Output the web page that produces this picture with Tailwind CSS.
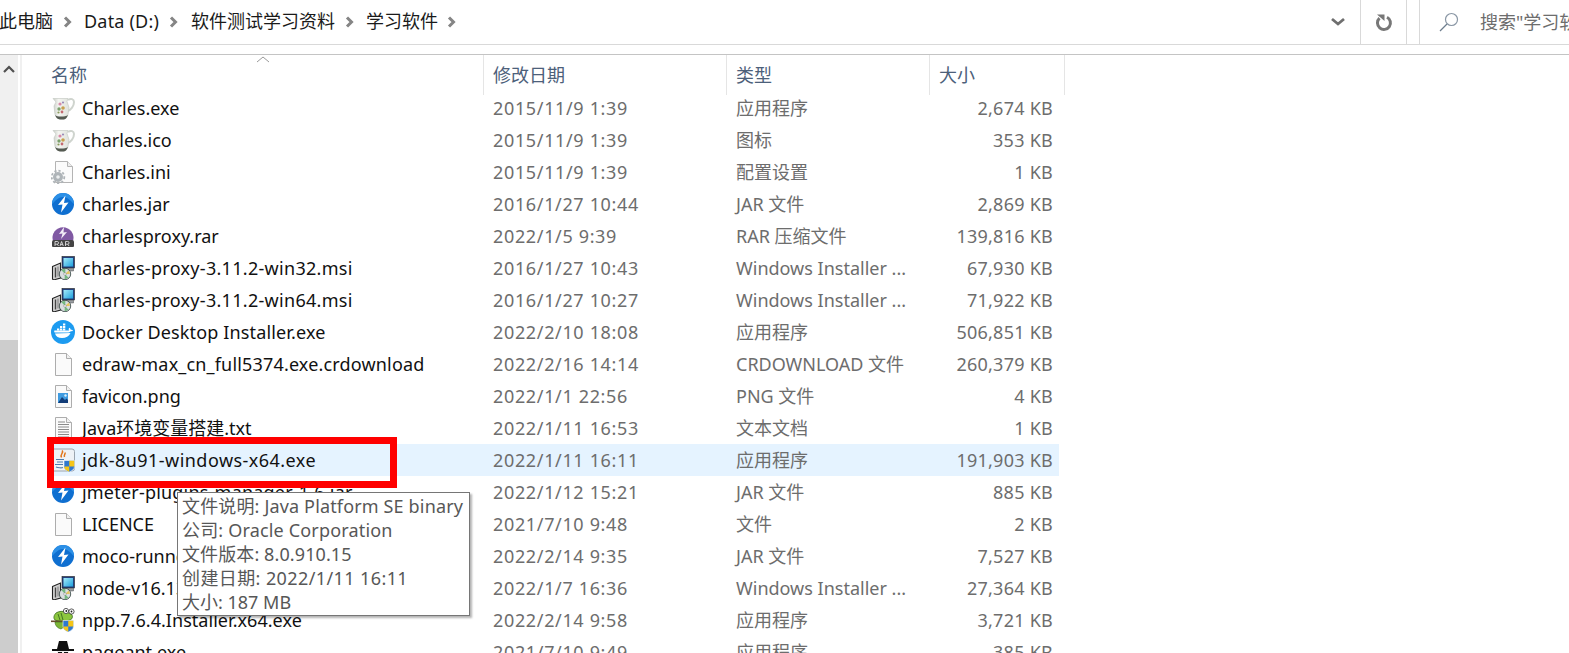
<!DOCTYPE html>
<html lang="zh">
<head>
<meta charset="utf-8">
<script src="https://cdn.jsdelivr.net/npm/@tailwindcss/browser@4"></script>
</head>
<body class="bg-white">
<svg width="0" height="0" class="absolute">
  <defs>
    <linearGradient id="jugfill" x1="0" x2="1" y1="0" y2="0"><stop offset="0" stop-color="#c9cdc6"/><stop offset=".35" stop-color="#f4f5f1"/><stop offset="1" stop-color="#dfe2dc"/></linearGradient>
    <symbol id="jug" viewBox="0 0 24 24">
      <path d="M17 4c3-2 6-1 6 2 0 4-3 8-6.500 9" fill="none" stroke="#cfd4ce" stroke-width="2"/>
      <path d="M2 2.500h15l-1 3 2 6-1 7c-1 3-2 4.500-6 4.500s-6-1.500-7-4.500L3 10l2-4z" fill="url(#jugfill)" stroke="#c0c5be" stroke-width=".6"/>
      <path d="M4 19c2 2 10 2 13 0l-1 2c-1 2-2 2.500-5 2.500s-5-.5-6-2.500z" fill="#555b52"/>
      <circle cx="9" cy="8" r="1.600" fill="#d98aa8"/><circle cx="12" cy="12" r="1.800" fill="#c7a04f"/><circle cx="8" cy="13" r="1.700" fill="#7aa06c"/><circle cx="12" cy="6.500" r="1.100" fill="#9a8bb8"/><circle cx="11" cy="16" r="1.400" fill="#c46a70"/><circle cx="7.500" cy="16.500" r="1.100" fill="#8a9a5c"/>
    </symbol>
    <symbol id="ini" viewBox="0 0 24 24">
      <path d="M4.500 1.500h12l5 5v16h-17z" fill="#fbfbfb" stroke="#b4b4b4"/><path d="M16.500 1.500v5h5" fill="#eee" stroke="#b4b4b4"/>
      <circle cx="7" cy="17" r="5" fill="#aeb4b8"/><circle cx="7" cy="17" r="6.300" fill="none" stroke="#aeb4b8" stroke-width="1.800" stroke-dasharray="2.200 2"/><circle cx="7" cy="17" r="1.800" fill="#eceff0"/>
    </symbol>
    <symbol id="jar" viewBox="0 0 24 24">
      <circle cx="12" cy="12" r="11" fill="#0f6fd0"/><path d="M1 12a11 11 0 0 1 22 0c0 1-5-7-11-7S1 13 1 12z" fill="#2b8fe6"/>
      <path d="M14.500 3.500 7 13l4.500-.5-1.500 8 7.500-10-4.500.5z" fill="#fff"/>
    </symbol>
    <symbol id="rar" viewBox="0 0 24 24">
      <path d="M2 17a10.500 10.500 0 1 1 20 0z" fill="#8059a3"/><path d="M13 3 8 10l3.500-.5L10 15l6-7-3.500.5z" fill="#f3eef8"/>
      <path d="M3 16h18a2 2 0 0 1 2 2v4a1 1 0 0 1-1 1H2a1 1 0 0 1-1-1v-4a2 2 0 0 1 2-2z" fill="#444"/>
      <path d="M4 22v-4.500h2.200a1.200 1.200 0 0 1 0 2.700H4m2.300 0L7.500 22M9 22l1.600-4.500L12.300 22M9.600 20.600h2.200M14.500 22v-4.500h2.200a1.200 1.200 0 0 1 0 2.700h-2.200m2.300 0L18 22" fill="none" stroke="#eee" stroke-width=".8"/>
    </symbol>
    <linearGradient id="screen" x1="0" x2="1" y1="0" y2="1"><stop offset="0" stop-color="#a4ecfa"/><stop offset="1" stop-color="#1f9fdc"/></linearGradient>
    <symbol id="msi" viewBox="0 0 24 24">
      <path d="M1.500 10.500l8-3.500v15l-7 2-1-1z" fill="#d2d2d2" stroke="#222" stroke-width="1.100"/><path d="M4.500 11.500v10" stroke="#444" stroke-width="1.400"/><path d="M7 10.500v10" stroke="#777"/>
      <rect x="11" y=".5" width="12.500" height="11.500" fill="#22407f" stroke="#222" stroke-width=".6"/><rect x="12.500" y="2" width="9.500" height="8.500" fill="url(#screen)"/>
      <path d="M12 12.200h10.500v2.800H12z" fill="#9a9ea3" stroke="#333" stroke-width=".4"/>
      <circle cx="14" cy="18" r="5.700" fill="#d9dee0" stroke="#2f3f3c" stroke-width=".8"/><path d="M14 18l-3.500-3.800a5 5 0 0 1 4-1zM14 18l3.500 3.800a5 5 0 0 1-4 1z" fill="#74b87f"/><path d="M14 18l3.800-3.500a5 5 0 0 1 1 3.500z" fill="#e6c75f"/><circle cx="14" cy="18" r="1.300" fill="#fff" stroke="#555" stroke-width=".4"/>
    </symbol>
    <symbol id="docker" viewBox="0 0 24 24">
      <circle cx="12" cy="12" r="12" fill="#1d9bf0"/>
      <path d="M3.500 12.500h14c1 0 2-.6 2.500-1.400.7.300 1.700.2 2.100-.3-.4-.9-1.400-1.300-2.300-1.100-.2-.9-.8-1.600-1.500-2-.8 1-.8 2-.2 2.800H4c-1 0-1 .5-.5 2zM4 13.500c.8 3 3.500 4.500 7 4.500 4 0 7-1.800 8.500-5z" fill="#fff"/>
      <path d="M6 8.500h2.300v2H6zM9 8.500h2.300v2H9zM12 8.500h2.300v2H12zM9 6h2.300v2H9zM12 6h2.300v2H12zM12 3.500h2.300v2H12z" fill="#fff"/>
    </symbol>
    <symbol id="blank" viewBox="0 0 24 24">
      <path d="M4.500 1.500h11l5 5v17h-16z" fill="#fafafa" stroke="#adadad"/><path d="M15.500 1.500v5h5" fill="#f0f0f0" stroke="#adadad"/>
    </symbol>
    <symbol id="png" viewBox="0 0 24 24">
      <path d="M4.500 1.500h11l5 5v17h-16z" fill="#fafafa" stroke="#adadad"/><path d="M15.500 1.500v5h5" fill="#f0f0f0" stroke="#adadad"/>
      <rect x="7" y="9" width="10" height="10" fill="#3f9be0"/><path d="M7 19l4-6 3 3 1.500-1.500L17 16v3z" fill="#123c78"/><circle cx="14.500" cy="11.500" r="1.200" fill="#d8eefc"/>
    </symbol>
    <symbol id="txt" viewBox="0 0 24 24">
      <path d="M4.500 1.500h11l5 5v17h-16z" fill="#fafafa" stroke="#adadad"/><path d="M15.500 1.500v5h5" fill="#f0f0f0" stroke="#adadad"/>
      <path d="M7 6h7M7 8.500h11M7 11h11M7 13.500h11M7 16h11M7 18.500h11M7 21h11" stroke="#8a8a8a"/>
    </symbol>
    <symbol id="java" viewBox="0 0 24 24">
      <rect x=".5" y="1" width="23" height="22" rx="2.500" fill="#eef2f6" stroke="#9aa4ae"/>
      <path d="M11 2.500c2.500 2-2.500 3.500-.5 7M14 4.500c.8 1.500-1.500 2.500-.5 4.500" fill="none" stroke="#e2761b" stroke-width="1.500"/>
      <path d="M5 11.500h8M6 14h6M4 16.500h8M5 19c2 1 6 1 7 .5" fill="none" stroke="#4f7cad" stroke-width="1.100"/>
      <path d="M13 12.500h10.500v6c0 3-2.800 4.500-5.250 5.500-2.450-1-5.250-2.500-5.250-5.500z" fill="#2f78cf" stroke="#fff" stroke-width=".6"/><path d="M18.250 12.800h5v5.700h-5zM13.300 18.500h4.950v5.200c-2.300-1-4.950-2.300-4.950-5.200z" fill="#f5c518"/>
    </symbol>
    <symbol id="npp" viewBox="0 0 24 24">
      <path d="M5 5c3-2 7-2 10-1l5 2c2 1 2 5-1 6-5 2-11 2-15 0-2-2-1-5 1-7z" fill="#8cc63f" stroke="#3a6b20" stroke-width=".8"/>
      <path d="M7 6l2 6M10 5l2 7" stroke="#3a6b20" stroke-width=".9"/>
      <circle cx="15" cy="3" r="2.600" fill="#fff" stroke="#333" stroke-width=".8"/><circle cx="20.500" cy="3.500" r="2.600" fill="#fff" stroke="#333" stroke-width=".8"/><circle cx="15.300" cy="3" r=".9" fill="#222"/><circle cx="20.500" cy="3.500" r=".9" fill="#222"/>
      <path d="M0 12.500h14v1.600H0z" fill="#6b4a2c"/><path d="M4 14c0 3 2 6 6 7l3-2v-5z" fill="#7db535" stroke="#3a6b20" stroke-width=".6"/>
      <path d="M12 12.500h10.500v6c0 3-2.800 4.500-5.250 5.500-2.450-1-5.250-2.500-5.250-5.500z" fill="#2f78cf" stroke="#fff" stroke-width=".6"/><path d="M17.250 12.800h5v5.700h-5zM12.300 18.500h4.950v5.200c-2.300-1-4.950-2.300-4.950-5.200z" fill="#f5c518"/>
    </symbol>
    <symbol id="pageant" viewBox="0 0 24 24">
      <path d="M8 1h8l2 8h5v2H1V9h5z" fill="#111"/><path d="M6 11h12v4H6z" fill="#eee"/><path d="M7 12h4v2H7zM13 12h4v2h-4z" fill="#111"/><path d="M5 15h14v9H5z" fill="#2540c0"/>
    </symbol>
  </defs>
</svg>

<div class="relative w-[1569px] h-[653px] overflow-hidden bg-white text-[18px] font-['Noto_Sans','Noto_Sans_CJK_SC',sans-serif]">
  <!-- address bar -->
  <div class="flex h-[45px] border-b border-[#d9d9d9]">
    <div class="flex items-center w-[1360px] text-[#1a1a1a] pb-[1px]">
      <span class="w-[54px] ml-[-1px] whitespace-nowrap">此电脑</span>
      <svg class="w-[10px] h-[14px] ml-[10px]" viewBox="0 0 10 14"><path d="M2 2.500l4.500 4.500-4.500 4.500" fill="none" stroke="#858585" stroke-width="3"/></svg>
      <span class="w-[76px] ml-[11px] whitespace-nowrap tracking-[0.2px]">Data (D:)</span>
      <svg class="w-[10px] h-[14px] ml-[9px]" viewBox="0 0 10 14"><path d="M2 2.500l4.500 4.500-4.500 4.500" fill="none" stroke="#858585" stroke-width="3"/></svg>
      <span class="w-[144px] ml-[12px] whitespace-nowrap">软件测试学习资料</span>
      <svg class="w-[10px] h-[14px] ml-[10px]" viewBox="0 0 10 14"><path d="M2 2.500l4.500 4.500-4.500 4.500" fill="none" stroke="#858585" stroke-width="3"/></svg>
      <span class="w-[72px] ml-[11px] whitespace-nowrap">学习软件</span>
      <svg class="w-[10px] h-[14px] ml-[9px]" viewBox="0 0 10 14"><path d="M2 2.500l4.500 4.500-4.500 4.500" fill="none" stroke="#858585" stroke-width="3"/></svg>
      <svg class="w-[16px] h-[12px] ml-[873px]" viewBox="0 0 16 12"><path d="M2 3l6 5 6-5" fill="none" stroke="#6f6f6f" stroke-width="2.800"/></svg>
    </div>
    <div class="flex items-center justify-center w-[47px] border-x border-[#d9d9d9]">
      <svg class="w-[20px] h-[20px]" viewBox="0 0 20 20"><path d="M13 5.200a6.500 6.500 0 1 1-7.500 1" fill="none" stroke="#777" stroke-width="3"/><path d="M3 2.500h7.500v6.500z" fill="#777"/></svg>
    </div>
    <div class="flex items-center w-[150px] ml-[12px] pl-[19px] border-l border-[#d9d9d9] overflow-hidden">
      <svg class="w-[20px] h-[20px] shrink-0" viewBox="0 0 20 20"><circle cx="12.500" cy="7.500" r="6" fill="none" stroke="#8a97a5" stroke-width="1.200"/><path d="M8 12l-7 7" stroke="#6d7d8d" stroke-width="1.300"/></svg>
      <span class="ml-[21px] text-[#6d6d6d] whitespace-nowrap">搜索"学习软件"</span>
    </div>
  </div>

  <div class="flex mt-[9px] border-t border-[#c4c4c4] h-[599px] overflow-hidden">
    <!-- scrollbar -->
    <div class="flex flex-col w-[18px] shrink-0 bg-[#f0f0f0]">
      <div class="flex justify-center pt-[10px] h-[285px]">
        <svg class="w-[12px] h-[8px]" viewBox="0 0 12 8"><path d="M1 7l5-5 5 5" fill="none" stroke="#505050" stroke-width="2.200"/></svg>
      </div>
      <div class="flex-1 bg-[#cdcdcd]"></div>
    </div>
    <div class="w-[2px] shrink-0"></div>
    <div class="w-[2px] shrink-0 bg-[#f0f0f0]"></div>

    <!-- file list -->
    <div class="flex-1 min-w-0">
      <div class="relative flex h-[40px] mb-[-3px] text-[#4c607a]">
        <div class="w-[462px] pl-[29px] pt-[7px] border-r border-[#e5e5e5]">名称</div>
        <div class="w-[243px] pl-[9px] pt-[7px] border-r border-[#e5e5e5]">修改日期</div>
        <div class="w-[203px] pl-[9px] pt-[7px] border-r border-[#e5e5e5]">类型</div>
        <div class="w-[135px] pl-[9px] pt-[7px] border-r border-[#e5e5e5]">大小</div>
        <svg class="absolute left-[234px] top-[1px] w-[14px] h-[7px]" viewBox="0 0 14 7"><path d="M1 6l6-5 6 5" fill="none" stroke="#9a9a9a"/></svg>
      </div>

      <div class="ml-[25px] w-[1012px] leading-[32px] text-[#6d6d6d]">
        <div class="grid grid-cols-[446px_243px_202px_115px] h-8 pr-[6px]"><div class="flex items-center pl-1 text-[#111]"><svg class="w-6 h-6 mr-[7px] shrink-0"><use href="#jug"/></svg>Charles.exe</div><div class="tracking-[0.65px]">2015/11/9 1:39</div><div>应用程序</div><div class="text-right tracking-[0.25px]">2,674 KB</div></div>
        <div class="grid grid-cols-[446px_243px_202px_115px] h-8 pr-[6px]"><div class="flex items-center pl-1 text-[#111]"><svg class="w-6 h-6 mr-[7px] shrink-0"><use href="#jug"/></svg>charles.ico</div><div class="tracking-[0.65px]">2015/11/9 1:39</div><div>图标</div><div class="text-right tracking-[0.25px]">353 KB</div></div>
        <div class="grid grid-cols-[446px_243px_202px_115px] h-8 pr-[6px]"><div class="flex items-center pl-1 text-[#111]"><svg class="w-6 h-6 mr-[7px] shrink-0"><use href="#ini"/></svg>Charles.ini</div><div class="tracking-[0.65px]">2015/11/9 1:39</div><div>配置设置</div><div class="text-right tracking-[0.25px]">1 KB</div></div>
        <div class="grid grid-cols-[446px_243px_202px_115px] h-8 pr-[6px]"><div class="flex items-center pl-1 text-[#111]"><svg class="w-6 h-6 mr-[7px] shrink-0"><use href="#jar"/></svg>charles.jar</div><div class="tracking-[0.65px]">2016/1/27 10:44</div><div>JAR 文件</div><div class="text-right tracking-[0.25px]">2,869 KB</div></div>
        <div class="grid grid-cols-[446px_243px_202px_115px] h-8 pr-[6px]"><div class="flex items-center pl-1 text-[#111]"><svg class="w-6 h-6 mr-[7px] shrink-0"><use href="#rar"/></svg>charlesproxy.rar</div><div class="tracking-[0.65px]">2022/1/5 9:39</div><div>RAR 压缩文件</div><div class="text-right tracking-[0.25px]">139,816 KB</div></div>
        <div class="grid grid-cols-[446px_243px_202px_115px] h-8 pr-[6px]"><div class="flex items-center pl-1 text-[#111] tracking-[0.3px]"><svg class="w-6 h-6 mr-[7px] shrink-0"><use href="#msi"/></svg>charles-proxy-3.11.2-win32.msi</div><div class="tracking-[0.65px]">2016/1/27 10:43</div><div>Windows Installer ...</div><div class="text-right tracking-[0.25px]">67,930 KB</div></div>
        <div class="grid grid-cols-[446px_243px_202px_115px] h-8 pr-[6px]"><div class="flex items-center pl-1 text-[#111] tracking-[0.3px]"><svg class="w-6 h-6 mr-[7px] shrink-0"><use href="#msi"/></svg>charles-proxy-3.11.2-win64.msi</div><div class="tracking-[0.65px]">2016/1/27 10:27</div><div>Windows Installer ...</div><div class="text-right tracking-[0.25px]">71,922 KB</div></div>
        <div class="grid grid-cols-[446px_243px_202px_115px] h-8 pr-[6px]"><div class="flex items-center pl-1 text-[#111] tracking-[0.14px]"><svg class="w-6 h-6 mr-[7px] shrink-0"><use href="#docker"/></svg>Docker Desktop Installer.exe</div><div class="tracking-[0.65px]">2022/2/10 18:08</div><div>应用程序</div><div class="text-right tracking-[0.25px]">506,851 KB</div></div>
        <div class="grid grid-cols-[446px_243px_202px_115px] h-8 pr-[6px]"><div class="flex items-center pl-1 text-[#111] tracking-[0.17px]"><svg class="w-6 h-6 mr-[7px] shrink-0"><use href="#blank"/></svg>edraw-max_cn_full5374.exe.crdownload</div><div class="tracking-[0.65px]">2022/2/16 14:14</div><div>CRDOWNLOAD 文件</div><div class="text-right tracking-[0.25px]">260,379 KB</div></div>
        <div class="grid grid-cols-[446px_243px_202px_115px] h-8 pr-[6px]"><div class="flex items-center pl-1 text-[#111]"><svg class="w-6 h-6 mr-[7px] shrink-0"><use href="#png"/></svg>favicon.png</div><div class="tracking-[0.65px]">2022/1/1 22:56</div><div>PNG 文件</div><div class="text-right tracking-[0.25px]">4 KB</div></div>
        <div class="grid grid-cols-[446px_243px_202px_115px] h-8 pr-[6px]"><div class="flex items-center pl-1 text-[#111]"><svg class="w-6 h-6 mr-[7px] shrink-0"><use href="#txt"/></svg>Java环境变量搭建.txt</div><div class="tracking-[0.65px]">2022/1/11 16:53</div><div>文本文档</div><div class="text-right tracking-[0.25px]">1 KB</div></div>
        <div class="grid grid-cols-[446px_243px_202px_115px] h-8 pr-[6px] bg-[#e5f3ff]"><div class="flex items-center pl-1 text-[#111] tracking-[0.46px]"><svg class="w-6 h-6 mr-[7px] shrink-0"><use href="#java"/></svg>jdk-8u91-windows-x64.exe</div><div class="tracking-[0.65px]">2022/1/11 16:11</div><div>应用程序</div><div class="text-right tracking-[0.25px]">191,903 KB</div></div>
        <div class="grid grid-cols-[446px_243px_202px_115px] h-8 pr-[6px]"><div class="flex items-center pl-1 text-[#111] tracking-[0.2px]"><svg class="w-6 h-6 mr-[7px] shrink-0"><use href="#jar"/></svg>jmeter-plugins-manager-1.6.jar</div><div class="tracking-[0.65px]">2022/1/12 15:21</div><div>JAR 文件</div><div class="text-right tracking-[0.25px]">885 KB</div></div>
        <div class="grid grid-cols-[446px_243px_202px_115px] h-8 pr-[6px]"><div class="flex items-center pl-1 text-[#111]"><svg class="w-6 h-6 mr-[7px] shrink-0"><use href="#blank"/></svg>LICENCE</div><div class="tracking-[0.65px]">2021/7/10 9:48</div><div>文件</div><div class="text-right tracking-[0.25px]">2 KB</div></div>
        <div class="grid grid-cols-[446px_243px_202px_115px] h-8 pr-[6px]"><div class="flex items-center pl-1 text-[#111]"><svg class="w-6 h-6 mr-[7px] shrink-0"><use href="#jar"/></svg>moco-runner-1.3.0.jar</div><div class="tracking-[0.65px]">2022/2/14 9:35</div><div>JAR 文件</div><div class="text-right tracking-[0.25px]">7,527 KB</div></div>
        <div class="grid grid-cols-[446px_243px_202px_115px] h-8 pr-[6px]"><div class="flex items-center pl-1 text-[#111]"><svg class="w-6 h-6 mr-[7px] shrink-0"><use href="#msi"/></svg>node-v16.13.2-x64.msi</div><div class="tracking-[0.65px]">2022/1/7 16:36</div><div>Windows Installer ...</div><div class="text-right tracking-[0.25px]">27,364 KB</div></div>
        <div class="grid grid-cols-[446px_243px_202px_115px] h-8 pr-[6px]"><div class="flex items-center pl-1 text-[#111] tracking-[0.04px]"><svg class="w-6 h-6 mr-[7px] shrink-0"><use href="#npp"/></svg>npp.7.6.4.Installer.x64.exe</div><div class="tracking-[0.65px]">2022/2/14 9:58</div><div>应用程序</div><div class="text-right tracking-[0.25px]">3,721 KB</div></div>
        <div class="grid grid-cols-[446px_243px_202px_115px] h-8 pr-[6px]"><div class="flex items-center pl-1 text-[#111]"><svg class="w-6 h-6 mr-[7px] shrink-0"><use href="#pageant"/></svg>pageant.exe</div><div class="tracking-[0.65px]">2021/7/10 9:49</div><div>应用程序</div><div class="text-right tracking-[0.25px]">385 KB</div></div>
      </div>
    </div>
  </div>

  <!-- red annotation -->
  <div class="absolute left-[47px] top-[437px] w-[350px] h-[51px] border-[7px] border-[#ff0000]"></div>

  <!-- tooltip -->
  <div class="absolute left-[177px] top-[492px] w-[293px] h-[124px] pt-[1px] pl-[4px] bg-white border border-[#767676] shadow-[2px_2px_2px_rgba(0,0,0,0.3)] text-[#575757] leading-[24px] whitespace-nowrap">
    <div class="tracking-[0.15px]">文件说明: Java Platform SE binary</div>
    <div class="tracking-[0.17px]">公司: Oracle Corporation</div>
    <div class="tracking-[0.1px]">文件版本: 8.0.910.15</div>
    <div class="tracking-[0.4px]">创建日期: 2022/1/11 16:11</div>
    <div>大小: 187 MB</div>
  </div>
</div>
</body>
</html>
